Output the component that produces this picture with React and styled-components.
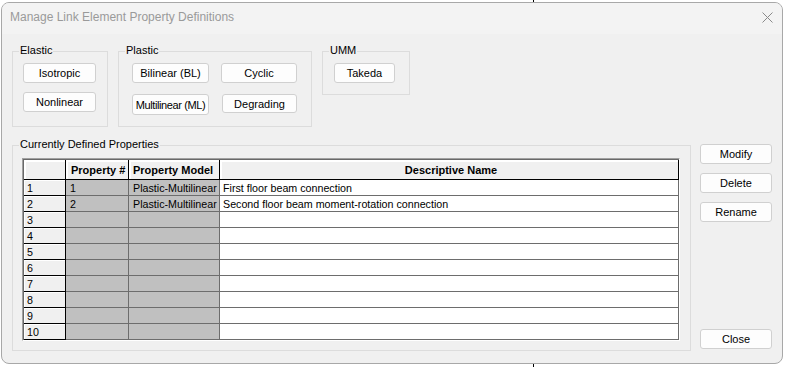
import React from 'react';
import styled, { createGlobalStyle } from 'styled-components';

const GlobalStyle = createGlobalStyle`
    html, body {
        margin: 0;
        padding: 0;
    }
    body {
        width: 786px;
        height: 367px;
        overflow: hidden;
        background: linear-gradient(to right, transparent 533px, #000 533px, #000 534px, transparent 534px), #fff;
        font-family: "Liberation Sans", Arial, sans-serif;
        font-size: 11px;
        color: #000;
    }
`

const Window = styled.div`
    margin: 2px 0 0 1px;
    width: 782px;
    height: 362px;
    box-sizing: border-box;
    border: 1px solid #a8a8a8;
    border-radius: 8px;
    background: #f0f0f0;
    overflow: hidden;
    display: flex;
    flex-direction: column;
`

const TitleBar = styled.div`
    height: 31px;
    flex: none;
    box-sizing: border-box;
    padding: 0 9px 3px 8px;
    display: flex;
    align-items: center;
    justify-content: space-between;
    background: #f3f3f3;
`

const Title = styled.div`
    font-size: 12px;
    color: #9a9a9a;
`

const Body = styled.div`
    flex: 1;
    padding: 17px 10px 0 10px;
    display: flex;
    flex-direction: column;
    gap: 18px;
`

const TopRow = styled.div`
    display: flex;
    align-items: flex-start;
    gap: 10px;
`

const BottomRow = styled.div`
    display: flex;
    align-items: flex-start;
    gap: 9px;
`

const Group = styled.div`
    position: relative;
    box-sizing: border-box;
    width: ${p => p.w}px;
    height: ${p => p.h}px;
    border: 1px solid #dcdcdc;
    padding: ${p => p.pad || '11px 0 0 10px'};
`

const Legend = styled.span`
    position: absolute;
    top: -8px;
    left: 6px;
    padding: 0 1px;
    line-height: 13px;
    background: #f0f0f0;
`

const ButtonGrid = styled.div`
    display: grid;
    grid-template-columns: ${p => p.cols || 'auto'};
    column-gap: ${p => p.colGap || 0}px;
    row-gap: ${p => p.rowGap || 0}px;
    align-items: start;
`

const Button = styled.button`
    box-sizing: border-box;
    width: ${p => p.w || 73}px;
    height: ${p => p.h || 20}px;
    margin-left: ${p => p.dx || 0}px;
    padding: 0;
    border: 1px solid #d0d0d0;
    border-radius: 3px;
    background: #fdfdfd;
    font-family: "Liberation Sans", Arial, sans-serif;
    font-size: 11px;
    letter-spacing: ${p => (p.tight ? '-0.4px' : 'normal')};
    white-space: nowrap;
    overflow: hidden;
    color: #000;
    text-align: center;
`

const SideColumn = styled.div`
    width: 72px;
    height: 205px;
    margin-top: -1px;
    display: flex;
    flex-direction: column;
    gap: 9px;
`

const CloseButton = styled(Button)`
    margin-top: auto;
`

const TableFrame = styled.div`
    width: 658px;
    box-sizing: border-box;
    border-style: solid;
    border-width: 1px;
    border-color: #a0a0a0 #ffffff #ffffff #a0a0a0;
`

const Grid = styled.div`
    display: grid;
    grid-template-columns: 42px 63px 91px 459px;
    grid-template-rows: 20px repeat(10, 16px);
    border-top: 1px solid #696969;
    border-left: 1px solid #696969;
    font-size: 10.7px;
`

const HeadCell = styled.div`
    box-sizing: border-box;
    padding-left: ${p => p.pad || 4}px;
    display: flex;
    align-items: center;
    justify-content: ${p => (p.center ? 'center' : 'flex-start')};
    background: #f0f0f0;
    border-right: 1px solid #000;
    border-bottom: 1px solid #000;
    box-shadow: inset 1px 1px 0 #fff, inset 2px 2px 0 #fff;
    font-weight: bold;
    font-size: 11px;
    white-space: nowrap;
    overflow: hidden;
`

const RowHead = styled(HeadCell)`
    font-weight: normal;
    font-size: 10.7px;
    padding-left: 3px;
    box-shadow: inset 1px 1px 0 #fff;
`

const Cell = styled.div`
    box-sizing: border-box;
    padding-left: ${p => p.pad || 4}px;
    display: flex;
    align-items: center;
    background: ${p => (p.shaded ? '#c0c0c0' : '#fff')};
    border-right: 1px solid #6d6d6d;
    border-bottom: 1px solid #6d6d6d;
    white-space: nowrap;
    overflow: hidden;
`

const CloseIcon = () => (
    <svg width="11" height="11" viewBox="0 0 11 11">
        <path d="M0.5 0.5 L10.5 10.5 M10.5 0.5 L0.5 10.5" stroke="#8a8a8a" strokeWidth="1" fill="none" />
    </svg>
)

const rows = [
    { id: 1, num: '1', model: 'Plastic-Multilinear', name: 'First floor beam connection' },
    { id: 2, num: '2', model: 'Plastic-Multilinear', name: 'Second floor beam moment-rotation connection' },
    { id: 3 }, { id: 4 }, { id: 5 }, { id: 6 }, { id: 7 }, { id: 8 }, { id: 9 }, { id: 10 },
]

const App = () => {
    return (
        <>
            <GlobalStyle />
            <Window>
                <TitleBar>
                    <Title>Manage Link Element Property Definitions</Title>
                    <CloseIcon />
                </TitleBar>
                <Body>
                    <TopRow>
                        <Group w={96} h={76}>
                            <Legend>Elastic</Legend>
                            <ButtonGrid rowGap={9}>
                                <Button>Isotropic</Button>
                                <Button>Nonlinear</Button>
                            </ButtonGrid>
                        </Group>
                        <Group w={194} h={76} pad="11px 0 0 13px">
                            <Legend>Plastic</Legend>
                            <ButtonGrid cols="77px 77px" colGap={12} rowGap={11}>
                                <Button w={77}>Bilinear (BL)</Button>
                                <Button w={76}>Cyclic</Button>
                                <Button w={77} h={21} tight>Multilinear (ML)</Button>
                                <Button w={75} h={19} dx={1}>Degrading</Button>
                            </ButtonGrid>
                        </Group>
                        <Group w={88} h={44} pad="11px 0 0 11px">
                            <Legend>UMM</Legend>
                            <Button w={61}>Takeda</Button>
                        </Group>
                    </TopRow>
                    <BottomRow>
                        <Group w={680} h={206} pad="12px 0 0 9px">
                            <Legend>Currently Defined Properties</Legend>
                            <TableFrame>
                                <Grid>
                                    <HeadCell />
                                    <HeadCell pad={5}>Property #</HeadCell>
                                    <HeadCell>Property Model</HeadCell>
                                    <HeadCell center pad={0}>Descriptive Name</HeadCell>
                                    {rows.map(r => (
                                        <React.Fragment key={r.id}>
                                            <RowHead>{r.id}</RowHead>
                                            <Cell shaded>{r.num}</Cell>
                                            <Cell shaded>{r.model}</Cell>
                                            <Cell pad={3}>{r.name}</Cell>
                                        </React.Fragment>
                                    ))}
                                </Grid>
                            </TableFrame>
                        </Group>
                        <SideColumn>
                            <Button w={72}>Modify</Button>
                            <Button w={72}>Delete</Button>
                            <Button w={72}>Rename</Button>
                            <CloseButton w={72}>Close</CloseButton>
                        </SideColumn>
                    </BottomRow>
                </Body>
            </Window>
        </>
    )
}

export default App
